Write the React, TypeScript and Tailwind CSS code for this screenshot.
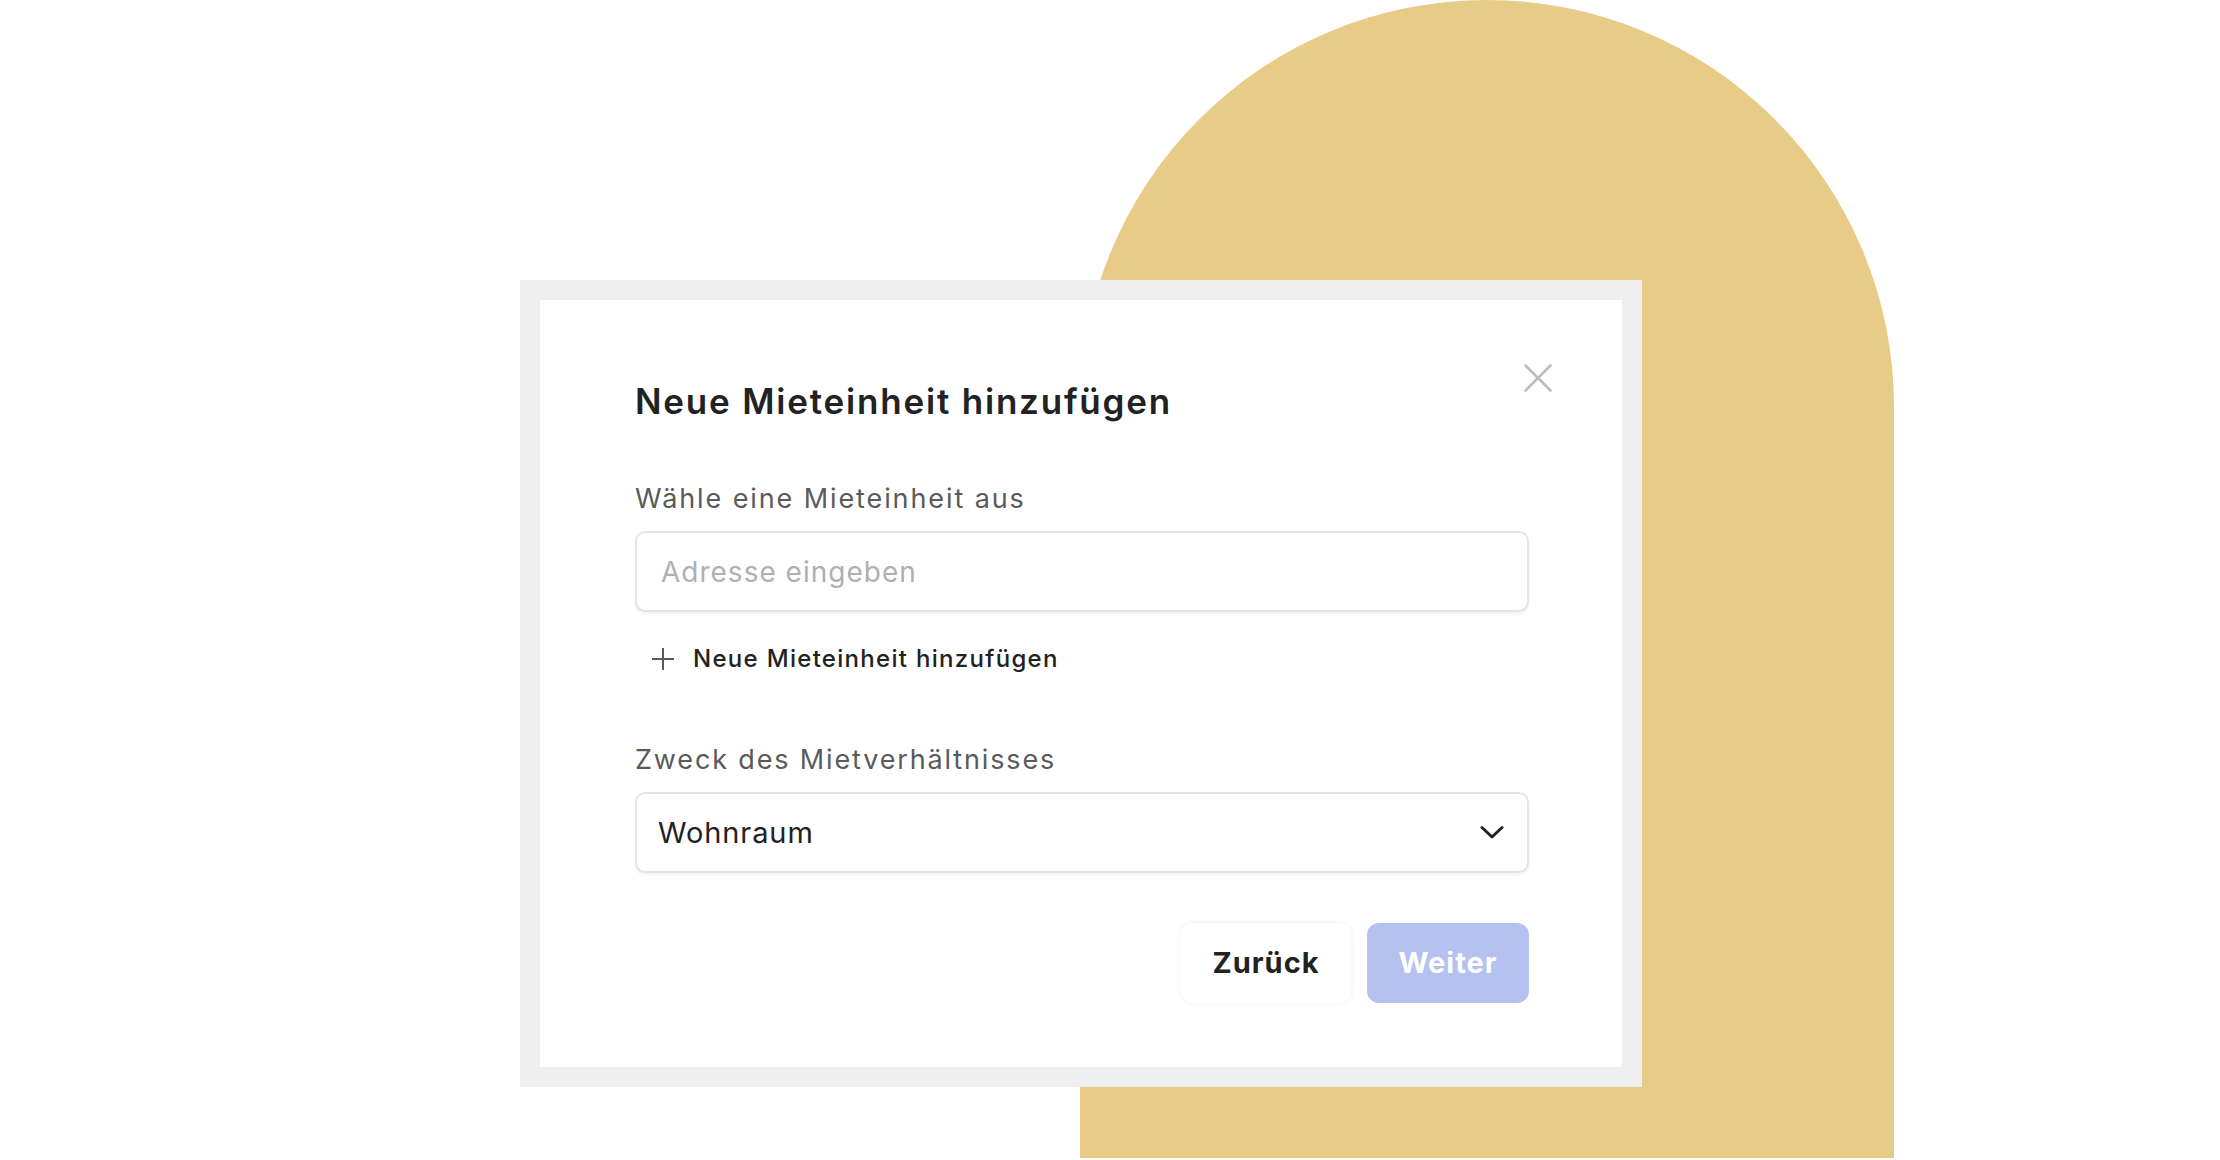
import React from 'react';

const font = "font-['Inter','Liberation_Sans',sans-serif]";

function CloseIcon() {
  return (
    <svg width="28" height="28" viewBox="0 0 28 28" fill="none">
      <path d="M1.5 1.5L26.5 26.5M26.5 1.5L1.5 26.5" stroke="#bdbdbd" strokeWidth="2.6" strokeLinecap="round" />
    </svg>
  );
}

function PlusIcon() {
  return (
    <svg width="24" height="24" viewBox="0 0 24 24" fill="none">
      <path d="M12 1V23M1 12H23" stroke="#5a5a5a" strokeWidth="2" />
    </svg>
  );
}

function ChevronDown() {
  return (
    <svg width="24" height="15" viewBox="0 0 24 15" fill="none">
      <path d="M2 2.5L12 12L22 2.5" stroke="#222222" strokeWidth="3" strokeLinecap="round" strokeLinejoin="round" />
    </svg>
  );
}

export default function App() {
  return (
    <div className={`w-full h-[1160px] bg-white overflow-hidden grid ${font}`}>
      {/* gold arch in the background */}
      <div className="col-start-1 row-start-1 ml-[1080px] w-[814px] h-[1158px] bg-[#e7cb86] rounded-t-[407px]" />

      {/* dialog */}
      <div className="col-start-1 row-start-1 ml-[520px] mt-[280px] self-start w-[1122px] bg-[#efefef] p-5">
        <div className="relative bg-white pt-[80px] pb-[64px] pl-[95px] pr-[93px]">
          <button className="absolute top-[64px] right-[70px] w-7 h-7 flex items-center justify-center">
            <CloseIcon />
          </button>

          <h1 className="text-[35px] leading-[42px] font-semibold tracking-[1.8px] text-[#222222]">Neue Mieteinheit hinzufügen</h1>

          <label className="block mt-[61px] text-[27px] leading-[32px] tracking-[1.9px] text-[#5a5a5a]">Wähle eine Mieteinheit aus</label>
          <div className="mt-4 h-[81px] border-2 border-[#e4e4e4] rounded-[10px] shadow-[0_2px_3px_rgba(0,0,0,0.05)] flex items-center pl-6 pr-6">
            <span className="text-[28px] leading-[34px] tracking-[1px] text-[#b0b0b0]">Adresse eingeben</span>
          </div>

          <button className="mt-8 flex items-center gap-[18px] pl-[16px] h-[30px]">
            <PlusIcon />
            <span className="text-[24px] leading-[30px] font-medium tracking-[1.3px] text-[#222222]">Neue Mieteinheit hinzufügen</span>
          </button>

          <label className="block mt-[70px] text-[27px] leading-[32px] tracking-[1.85px] text-[#5a5a5a]">Zweck des Mietverhältnisses</label>
          <div className="mt-4 h-[81px] border-2 border-[#e4e4e4] rounded-[10px] shadow-[0_2px_3px_rgba(0,0,0,0.05)] flex items-center justify-between pl-[21px] pr-[23px]">
            <span className="text-[29px] leading-[34px] tracking-[0.9px] text-[#222222]">Wohnraum</span>
            <ChevronDown />
          </div>

          <div className="mt-[50px] flex justify-end gap-4">
            <button className="h-[80px] w-[170px] rounded-xl bg-white shadow-[0_0_6px_rgba(0,0,0,0.07)] text-[29px] font-bold tracking-[1px] text-[#222222]">
              Zurück
            </button>
            <button className="h-[80px] w-[162px] rounded-xl bg-[#b5c2f0] text-[29px] font-bold tracking-[1px] text-white">
              Weiter
            </button>
          </div>
        </div>
      </div>
    </div>
  );
}
